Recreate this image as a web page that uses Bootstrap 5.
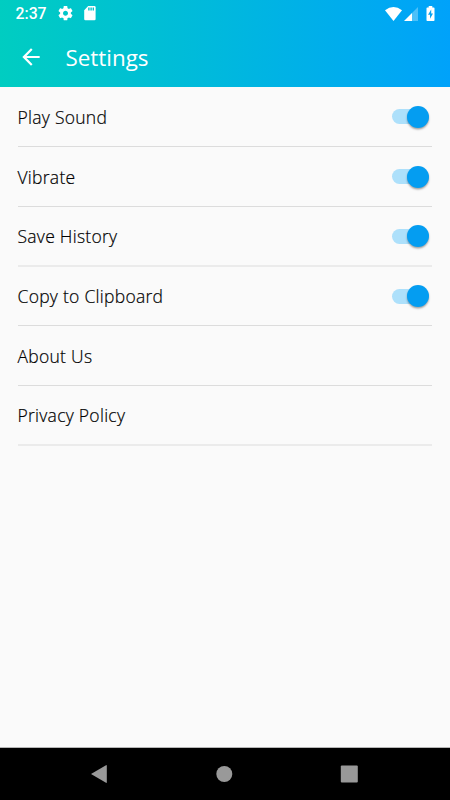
<!DOCTYPE html>
<html lang="en">
<head>
<meta charset="utf-8">
<meta name="viewport" content="width=device-width, initial-scale=1">
<title>Settings</title>
<link href="https://cdn.jsdelivr.net/npm/bootstrap@5.3.0/dist/css/bootstrap.min.css" rel="stylesheet">
<style>
body{font-family:"Open Sans","Noto Sans",sans-serif;background:#fafafa;height:800px;overflow:hidden}
.app-top{height:87px;background:linear-gradient(90deg,#00cdc1,#00b8de 50%,#00a2fa)}
.status-row{height:27px;padding:0 15.5px 0 15.5px}
.clock{font:500 15.8px/27px Roboto,sans-serif;width:42.5px}
.sd-icon{margin-left:11px}
.signal-icon{margin-left:2px}
.battery-icon{margin-left:8px}
.title-row{height:60px;padding-left:18px}
.page-title{font-size:22.4px;line-height:30px;font-weight:400;margin-left:21.5px;padding-top:1px}
.settings{padding:0 18px 0 17.5px}
.setting{height:60px;border-bottom:1px solid #dcdcdc;color:#000;font-size:17.5px;font-weight:300;letter-spacing:.27px;-webkit-text-stroke:.2px #000;cursor:pointer}
.setting:nth-child(3n){border-bottom:2px solid #ebebeb}
.setting:nth-child(4){height:59px}
.setting-label{padding-top:1px}
.toggle-track{width:33px;height:15px;margin-right:7px;background:#ade0fb;border-radius:8px}
.toggle-thumb{width:22px;height:22px;margin-right:-4px;background:#049df1;border-radius:50%;box-shadow:0 1.5px 2px rgba(0,0,0,.35)}
.nav-keys{height:53px;background:#000;border-top:1px solid #b5b5b5;padding:0 92px 1px 90px}
svg{display:block;flex:none}
</style>
</head>
<body class="d-flex flex-column">
<header class="app-top text-white">
  <div class="status-row d-flex align-items-center">
    <span class="clock">2:37</span>
    <svg width="15" height="15" viewBox="1.5 2 21 21" fill="#fff"><path d="M19.43 12.98c.04-.32.07-.64.07-.98s-.03-.66-.07-.98l2.11-1.65c.19-.15.24-.42.12-.64l-2-3.46c-.12-.22-.39-.3-.61-.22l-2.49 1c-.52-.4-1.08-.73-1.69-.98l-.38-2.65C14.46 2.18 14.25 2 14 2h-4c-.25 0-.46.18-.49.42l-.38 2.65c-.61.25-1.17.59-1.69.98l-2.49-1c-.23-.09-.49 0-.61.22l-2 3.46c-.13.22-.07.49.12.64l2.11 1.65c-.04.32-.07.65-.07.98s.03.66.07.98l-2.11 1.65c-.19.15-.24.42-.12.64l2 3.46c.12.22.39.3.61.22l2.49-1c.52.4 1.08.73 1.69.98l.38 2.65c.03.24.24.42.49.42h4c.25 0 .46-.18.49-.42l.38-2.65c.61-.25 1.17-.59 1.69-.98l2.49 1c.23.09.49 0 .61-.22l2-3.46c.12-.22.07-.49-.12-.64l-2.11-1.65zM12 15.5c-1.93 0-3.5-1.57-3.5-3.5s1.57-3.5 3.5-3.5 3.5 1.57 3.5 3.5-1.57 3.5-3.5 3.5z"/></svg>
    <svg class="sd-icon" width="12" height="15" viewBox="0 0 12 15" fill="#fff"><path d="M4.2 0H10.4q1.2 0 1.2 1.2V13q0 1.2-1.2 1.2H1.4Q.2 14.200.2 13V4.200z"/><path fill="#00c6cc" d="M4.200 1.600h1.400v2.800H4.200zM6.400 1.600h1.400v2.800H6.400zM8.600 1.600H10v2.800H8.600z"/></svg>
    <div class="d-flex align-items-center ms-auto">
      <svg width="17" height="14" viewBox="0 0 17 14" fill="#fff"><path d="M0 3.200Q8.500-3 17 3.200L8.500 14z"/></svg>
      <svg class="signal-icon" width="14" height="14" viewBox="0 0 14 14" fill="#fff"><path opacity=".3" d="M14 0v14H8V6z"/><path d="M0 14L8 6V14z"/></svg>
      <svg class="battery-icon" width="9" height="15" viewBox="0 0 9 15"><path fill="#fff" d="M2.700 0h3.600v1.500h1.400q.8 0 .8.8v11.900q0 .8-.8.8H1.300q-.8 0-.8-.8V2.300q0-.8.8-.8h1.400z"/><path fill="#08a4f2" d="M5.200 3.600L2 8.800h2v4l3-5.300H5.200z"/></svg>
    </div>
  </div>
  <div class="title-row d-flex align-items-center">
    <svg width="26" height="26" viewBox="0 0 24 24" fill="#fff"><path d="M20 11H7.830l5.590-5.590L12 4l-8 8 8 8 1.410-1.410L7.830 13H20z"/></svg>
    <h1 class="page-title mb-0">Settings</h1>
  </div>
</header>
<main class="settings flex-grow-1">
  <div class="setting d-flex align-items-center justify-content-between"><span class="setting-label">Play Sound</span><div class="toggle-track d-flex align-items-center justify-content-end"><span class="toggle-thumb flex-shrink-0"></span></div></div>
  <div class="setting d-flex align-items-center justify-content-between"><span class="setting-label">Vibrate</span><div class="toggle-track d-flex align-items-center justify-content-end"><span class="toggle-thumb flex-shrink-0"></span></div></div>
  <div class="setting d-flex align-items-center justify-content-between"><span class="setting-label">Save History</span><div class="toggle-track d-flex align-items-center justify-content-end"><span class="toggle-thumb flex-shrink-0"></span></div></div>
  <div class="setting d-flex align-items-center justify-content-between"><span class="setting-label">Copy to Clipboard</span><div class="toggle-track d-flex align-items-center justify-content-end"><span class="toggle-thumb flex-shrink-0"></span></div></div>
  <div class="setting d-flex align-items-center"><span class="setting-label">About Us</span></div>
  <div class="setting d-flex align-items-center"><span class="setting-label">Privacy Policy</span></div>
</main>
<nav class="nav-keys d-flex align-items-center justify-content-between flex-shrink-0">
  <svg width="18" height="18" viewBox="0 0 18 18"><path fill="#999" d="M1 9L16 .2q.8-.3.8.5v16.600q0 .8-.8.5z"/></svg>
  <svg width="18" height="18" viewBox="0 0 18 18"><circle cx="9.300" cy="9" r="8" fill="#999"/></svg>
  <svg width="18" height="18" viewBox="0 0 18 18"><rect x=".8" y=".5" width="17" height="17" rx="1" fill="#999"/></svg>
</nav>
</body>
</html>
